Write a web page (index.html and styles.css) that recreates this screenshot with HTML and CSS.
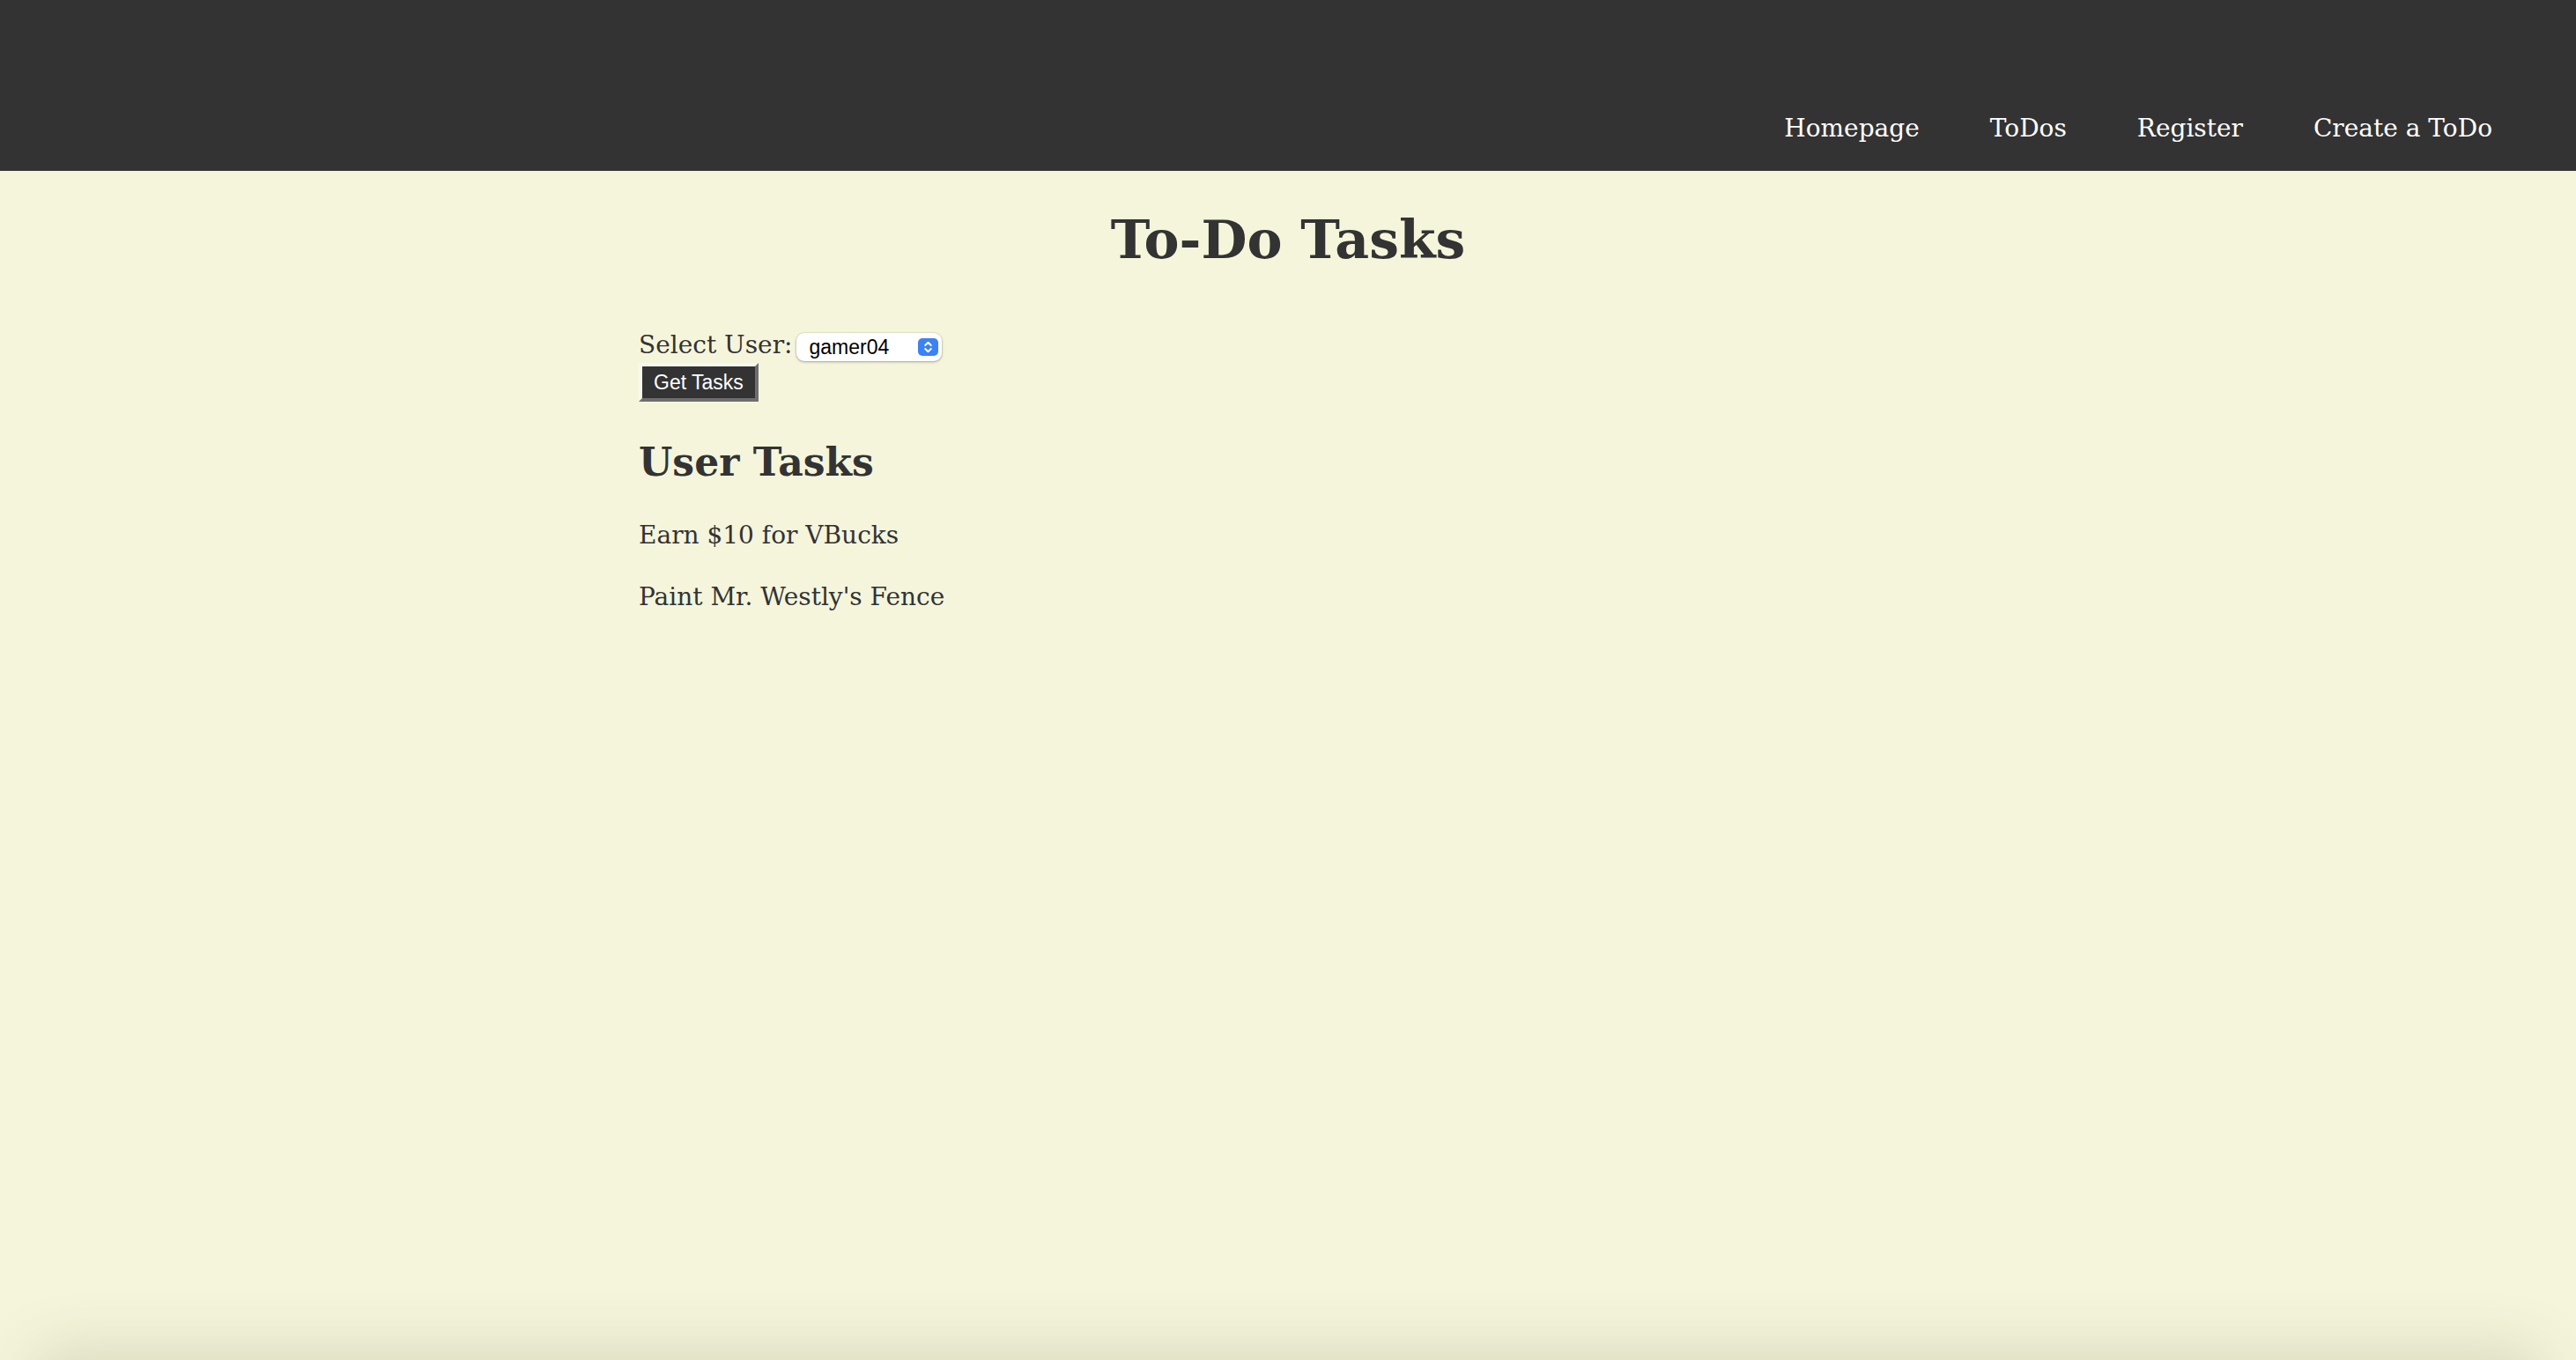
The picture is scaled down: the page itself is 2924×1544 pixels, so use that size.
FILE: index.html
```html
<!DOCTYPE html>
<html lang="en">
<head>
<meta charset="utf-8">
<title>To-Do Tasks</title>
<link rel="stylesheet" href="styles.css">
</head>
<body>
<header class="nav">
  <a class="nav-link" href="#">Homepage</a>
  <a class="nav-link" href="#">ToDos</a>
  <a class="nav-link" href="#">Register</a>
  <a class="nav-link" href="#">Create a ToDo</a>
</header>
<main class="content">
  <h1 class="title">To-Do Tasks</h1>
  <form class="user-form">
    <div class="select-row">
      <label class="select-label" for="user">Select User:</label>
      <span class="select-wrap">
        <select id="user" class="user-select">
          <option>gamer04</option>
        </select>
        <span class="stepper">
          <svg width="23" height="20" viewBox="0 0 23 20">
            <rect x="0" y="0" width="23" height="20" rx="5" fill="#3b82f6"/>
            <path d="M8.2 8 L11.5 4.8 L14.8 8" fill="none" stroke="#fff" stroke-width="1.9" stroke-linecap="round" stroke-linejoin="round"/>
            <path d="M8.2 12 L11.5 15.2 L14.8 12" fill="none" stroke="#fff" stroke-width="1.9" stroke-linecap="round" stroke-linejoin="round"/>
          </svg>
        </span>
      </span>
    </div>
    <button type="button" class="get-btn">Get Tasks</button>
  </form>
  <h2 class="subtitle">User Tasks</h2>
  <p class="task">Earn $10 for VBucks</p>
  <p class="task">Paint Mr. Westly's Fence</p>
</main>
<div class="bottom-shadow"></div>
</body>
</html>
```
FILE: styles.css
```css
html, body {
  margin: 0;
  padding: 0;
}
body {
  background: #f5f5dc;
  color: #333333;
  font-family: "DejaVu Serif", Georgia, serif;
  min-height: 1544px;
  overflow: hidden;
}
.nav {
  box-sizing: border-box;
  height: 194px;
  background: #333333;
  display: flex;
  justify-content: flex-end;
  align-items: flex-start;
  padding: 126px 55px 0 0;
}
.nav-link {
  color: #ffffff;
  text-decoration: none;
  font-size: 28px;
  line-height: 40px;
  padding: 0 40px;
}
.content {
  width: 1474px;
  margin: 0 auto;
}
.title {
  text-align: center;
  font-size: 60px;
  line-height: 70px;
  font-weight: bold;
  margin: 43px 0 67px;
}
.user-form {
  margin: 0;
}
.select-row {
  display: flex;
  align-items: flex-start;
  gap: 5px;
}
.select-label {
  font-size: 28px;
  line-height: 36px;
}
.select-wrap {
  position: relative;
  display: inline-block;
  margin-top: 4px;
}
.user-select {
  -webkit-appearance: none;
  appearance: none;
  box-sizing: border-box;
  width: 165px;
  height: 32px;
  border: none;
  border-radius: 9px;
  background: #ffffff;
  box-shadow: 0 0 0 1px rgba(0,0,0,0.05), 0 1px 3px rgba(0,0,0,0.3);
  font-family: "Liberation Sans", Arial, sans-serif;
  font-size: 23px;
  color: #000000;
  padding: 0 0 0 14px;
  margin: 0;
}
.stepper {
  position: absolute;
  right: 4px;
  top: 6px;
  width: 23px;
  height: 20px;
  pointer-events: none;
  display: block;
}
.stepper svg {
  display: block;
}
.get-btn {
  display: block;
  box-sizing: border-box;
  margin-top: 2px;
  height: 44px;
  padding: 0 13px;
  background: #333333;
  color: #ffffff;
  font-family: "Liberation Sans", Arial, sans-serif;
  font-size: 23px;
  line-height: 36px;
  border-style: solid;
  border-width: 4px;
  border-color: #f7f7f2 #6e6e6e #6e6e6e #f7f7f2;
  border-radius: 0;
}
.subtitle {
  font-size: 44px;
  line-height: 54px;
  font-weight: bold;
  margin: 42px 0 37px;
}
.task {
  font-size: 28px;
  line-height: 38px;
  margin: 0 0 32px;
}
.bottom-shadow {
  position: fixed;
  left: 50px;
  right: 50px;
  top: 1544px;
  height: 100px;
  box-shadow: 0 0 70px 10px rgba(70, 70, 30, 0.16);
}
```
